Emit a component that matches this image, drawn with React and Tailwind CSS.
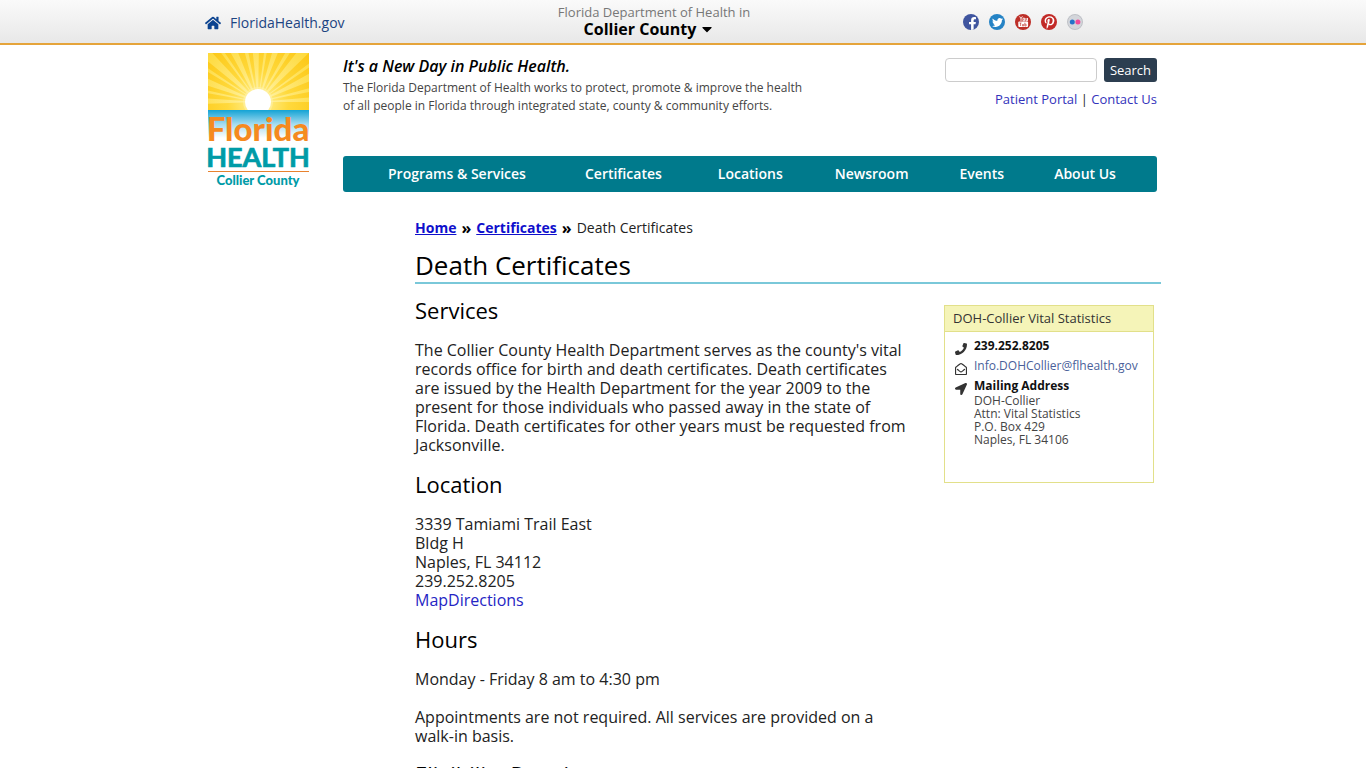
import { FaFacebookF, FaTwitter, FaPinterestP, FaHome, FaPhone, FaRegEnvelopeOpen, FaLocationArrow, FaCaretDown } from "react-icons/fa";

const navItems = [
    { label: "Programs & Services", className: "ml-[45px]" },
    { label: "Certificates", className: "ml-[59px]" },
    { label: "Locations", className: "ml-14" },
    { label: "Newsroom", className: "ml-[52px]" },
    { label: "Events", className: "ml-[51px]" },
    { label: "About Us", className: "ml-[50px]" },
];

const socialLinks = [
    { label: "Facebook", className: "bg-[#3f559f]", icon: <FacebookIcon /> },
    { label: "Twitter", className: "bg-[#2583c5]", icon: <FaTwitter className="size-[11px]" /> },
    { label: "YouTube", className: "bg-[#bd2f28]", icon: <YouTubeIcon /> },
    { label: "Pinterest", className: "bg-[#c22a27]", icon: <FaPinterestP className="size-[13px]" /> },
    { label: "Flickr", className: "bg-[#d4d6db]", icon: <FlickrIcon /> },
];

// start and end angle of each ray, in degrees
const rays = [
    [0, 5], [11, 15], [22, 29], [34, 37], [44, 52], [57, 61], [68, 74], [80, 83], [89, 96],
    [101, 105], [112, 119], [124, 127], [133, 141], [146, 149], [155, 162], [167, 170], [176, 182],
];

function FacebookIcon() {
    return <FaFacebookF className="mt-[3px] ml-[2px] size-[13px]" />;
}

function YouTubeIcon() {
    return (
        <svg viewBox="0 0 16 16" className="size-4" aria-hidden="true">
            <path d="M4.6 2.3l1.4 2.4V7M7.4 2.3L6 4.7M8 4.2h1.6V6.8H8zM11 4v2.8h1.5V4" fill="none" stroke="#fff" strokeWidth=".9" />
            <rect x="3.3" y="7.5" width="9.8" height="5.4" rx="1" fill="#fff" />
            <path d="M4.5 9h2M5.5 9v3M7.4 10v2h1.2v-2M9.8 8.7V12h1.3v-1.8H9.8" fill="none" stroke="#bd2f28" strokeWidth=".6" />
        </svg>
    );
}

function FlickrIcon() {
    return (
        <svg viewBox="0 0 16 16" className="size-4" aria-hidden="true">
            <circle cx="8" cy="8" r="7.5" fill="none" stroke="#b9bbc0" strokeWidth=".8" />
            <circle cx="5.3" cy="8" r="2.5" fill="#2472c8" />
            <circle cx="10.9" cy="8" r="2.5" fill="#f04a98" />
        </svg>
    );
}

function Logo() {
    const point = (deg) => {
        const a = (deg * Math.PI) / 180;
        return `${50 + 110 * Math.cos(a)} ${49 - 110 * Math.sin(a)}`;
    };
    const rayPath = rays.map(([from, to]) => `M50 49L${point(from)}L${point(to)}Z`).join("");

    return (
        <svg viewBox="0 0 102 136" className="block h-[136px] w-[102px] overflow-visible" role="img" aria-label="Florida Health Collier County">
            <defs>
                <radialGradient id="sky" gradientUnits="userSpaceOnUse" cx="50" cy="49" r="68">
                    <stop offset="0" stopColor="#fff3a0" />
                    <stop offset=".45" stopColor="#ffd93c" />
                    <stop offset="1" stopColor="#fcc817" />
                </radialGradient>
                <radialGradient id="ray" gradientUnits="userSpaceOnUse" cx="50" cy="49" r="68">
                    <stop offset="0" stopColor="#fff8c4" />
                    <stop offset="1" stopColor="#ffe24f" />
                </radialGradient>
                <linearGradient id="sea" x1="0" y1="0" x2="0" y2="1">
                    <stop offset="0" stopColor="#14a3d5" />
                    <stop offset=".5" stopColor="#a3dbf0" />
                    <stop offset="1" stopColor="#fff" />
                </linearGradient>
                <clipPath id="skyArea"><path d="M0 0h101v57H0z" /></clipPath>
            </defs>
            <g clipPath="url(#skyArea)">
                <path d="M0 0h101v57H0z" fill="url(#sky)" />
                <path d={rayPath} fill="url(#ray)" opacity=".7" />
                <circle cx="50" cy="49" r="15" fill="#fff2a8" opacity=".6" />
                <circle cx="50" cy="49" r="13" fill="#fff" />
            </g>
            <path d="M0 57h101v28H0z" fill="url(#sea)" />
            <g textAnchor="middle">
                <text x="50" y="88" fontSize="33" fill="#f58a1f" className="font-['Lato'] font-black">Florida</text>
                <text x="50" y="114" fontSize="27" fill="#009ba7" stroke="#009ba7" strokeWidth=".7" className="font-['Lato'] font-bold">HEALTH</text>
                <text x="50" y="132" fontSize="13" fill="#009ba7" className="font-['Lato'] font-black">Collier County</text>
            </g>
            <path d="M0 118.5h101" stroke="#e8822e" strokeWidth="1" />
        </svg>
    );
}

function TopBar() {
    return (
        <div className="h-[45px] border-b-2 border-[#e5a43b] bg-linear-to-b from-[#fafafa] to-[#e8e8e8]">
            <div className="mx-auto flex h-full max-w-[956px] items-center">
                <a href="#" className="flex flex-1 items-center gap-[9px] pt-[2px] text-sm text-[#1d4582]">
                    <FaHome className="size-4 text-[#0b4390]" />
                    FloridaHealth.gov
                </a>
                <button type="button" className="flex flex-col items-center pb-px pl-5">
                    <span className="text-[13px] leading-[15px] text-[#777]">Florida Department of Health in</span>
                    <span className="flex items-center gap-[6px] pr-3 text-base leading-[18px] font-bold text-black">
                        Collier County
                        <FaCaretDown className="h-4 w-[10px]" />
                    </span>
                </button>
                <div className="flex flex-1 justify-end gap-[10px] pt-px pr-[78px]">
                    {socialLinks.map((link) => (
                        <a
                            key={link.label}
                            href="#"
                            aria-label={link.label}
                            className={`flex size-4 items-center justify-center overflow-hidden rounded-full text-white ${link.className}`}
                        >
                            {link.icon}
                        </a>
                    ))}
                </div>
            </div>
        </div>
    );
}

function Header() {
    return (
        <header className="flex gap-[33px] pt-2 pl-[3px]">
            <a href="#" className="shrink-0"><Logo /></a>
            <div className="flex-1">
                <div className="flex h-[103px] items-start justify-between">
                    <div>
                        <p className="mt-[2px] text-base leading-[22px] font-semibold text-black italic">It's a New Day in Public Health.</p>
                        <p className="mt-[2px] text-xs leading-[18px] text-[#444]">
                            The Florida Department of Health works to protect, promote &amp; improve the health
                            <br />
                            of all people in Florida through integrated state, county &amp; community efforts.
                        </p>
                    </div>
                    <div className="mt-[5px] text-[13px]">
                        <form className="flex gap-[7px]" onSubmit={(e) => e.preventDefault()}>
                            <input type="text" aria-label="Search" className="h-6 w-[152px] rounded border border-[#ccc] bg-white px-2" />
                            <button type="submit" className="h-6 w-[53px] rounded-[3px] bg-[#2c3e50] pt-px font-medium text-white">Search</button>
                        </form>
                        <p className="mt-2 text-right leading-[18px]">
                            <a href="#" className="text-[#3333bb]">Patient Portal</a> | <a href="#" className="text-[#3333bb]">Contact Us</a>
                        </p>
                    </div>
                </div>
                <nav className="flex h-9 items-center rounded-[3px] bg-[#007a8c] text-sm font-semibold whitespace-nowrap text-white">
                    {navItems.map((item) => (
                        <a key={item.label} href="#" className={item.className}>{item.label}</a>
                    ))}
                </nav>
            </div>
        </header>
    );
}

function ContactCard() {
    return (
        <aside className="mt-[21px] mr-[7px] h-[178px] w-[210px] shrink-0 border border-[#e2e08a] text-xs text-[#444]">
            <h2 className="border-b border-[#e2e08a] bg-[#f5f4b8] pl-2 text-[13px] leading-[25px] text-[#333]">DOH-Collier Vital Statistics</h2>
            <div className="grid grid-cols-[13px_1fr] gap-x-[6px] pt-1 pl-[10px]">
                <FaPhone className="mt-[7px] size-3 text-[#333]" />
                <p className="leading-5 font-bold text-[#111]">239.252.8205</p>
                <FaRegEnvelopeOpen className="mt-[7px] size-3 text-[#333]" />
                <a href="#" className="leading-5 text-[#4a5f9a]">Info.DOHCollier@flhealth.gov</a>
                <FaLocationArrow className="mt-[7px] size-3 text-[#333]" />
                <div>
                    <p className="mt-[2px] leading-4 font-bold text-[#111]">Mailing Address</p>
                    <address className="leading-[13px] not-italic">
                        DOH-Collier<br />
                        Attn: Vital Statistics<br />
                        P.O. Box 429<br />
                        Naples, FL 34106
                    </address>
                </div>
            </div>
        </aside>
    );
}

const App = () => {
    return (
        <div className="h-screen overflow-hidden bg-white font-['Open_Sans','Noto_Sans',sans-serif] text-[#222]">
            <TopBar />
            <div className="mx-auto max-w-[956px] pr-1">
                <Header />
                <main className="mt-[26px] -mr-1 ml-[210px]">
                    <div className="flex items-center text-sm leading-5">
                        <a href="#" className="font-bold text-[#0f0fcc] underline">Home</a>
                        <span className="mx-[5px] text-base leading-5 font-bold text-black">»</span>
                        <a href="#" className="font-bold text-[#0f0fcc] underline">Certificates</a>
                        <span className="mx-[5px] text-base leading-5 font-bold text-black">»</span>
                        <span>Death Certificates</span>
                    </div>
                    <h1 className="mt-[11px] border-b-2 border-[#7ac8d9] text-[26px] leading-[33px] text-black">Death Certificates</h1>
                    <div className="flex justify-between text-base leading-[19px]">
                        <div className="w-[496px]">
                            <h2 className="mt-[11px] text-[22px] leading-[30px] text-black">Services</h2>
                            <p className="mt-4">
                                The Collier County Health Department serves as the county's vital records office for birth and death certificates. Death certificates are issued by the Health Department for the year 2009 to the present for those individuals who passed away in the state of Florida. Death certificates for other years must be requested from Jacksonville.
                            </p>
                            <h2 className="mt-[14px] text-[22px] leading-[30px] text-black">Location</h2>
                            <p className="mt-4">
                                3339 Tamiami Trail East<br />
                                Bldg H<br />
                                Naples, FL 34112<br />
                                239.252.8205<br />
                                <a href="#" className="text-[#2525c4]">Map</a><a href="#" className="text-[#2525c4]">Directions</a>
                            </p>
                            <h2 className="mt-[14px] text-[22px] leading-[30px] text-black">Hours</h2>
                            <p className="mt-4">Monday - Friday 8 am to 4:30 pm</p>
                            <p className="mt-[19px]">Appointments are not required. All services are provided on a walk-in basis.</p>
                            <h2 className="mt-[13px] text-[22px] leading-[30px] text-black">Eligibility Requirements</h2>
                        </div>
                        <ContactCard />
                    </div>
                </main>
            </div>
        </div>
    );
};

export default App;
